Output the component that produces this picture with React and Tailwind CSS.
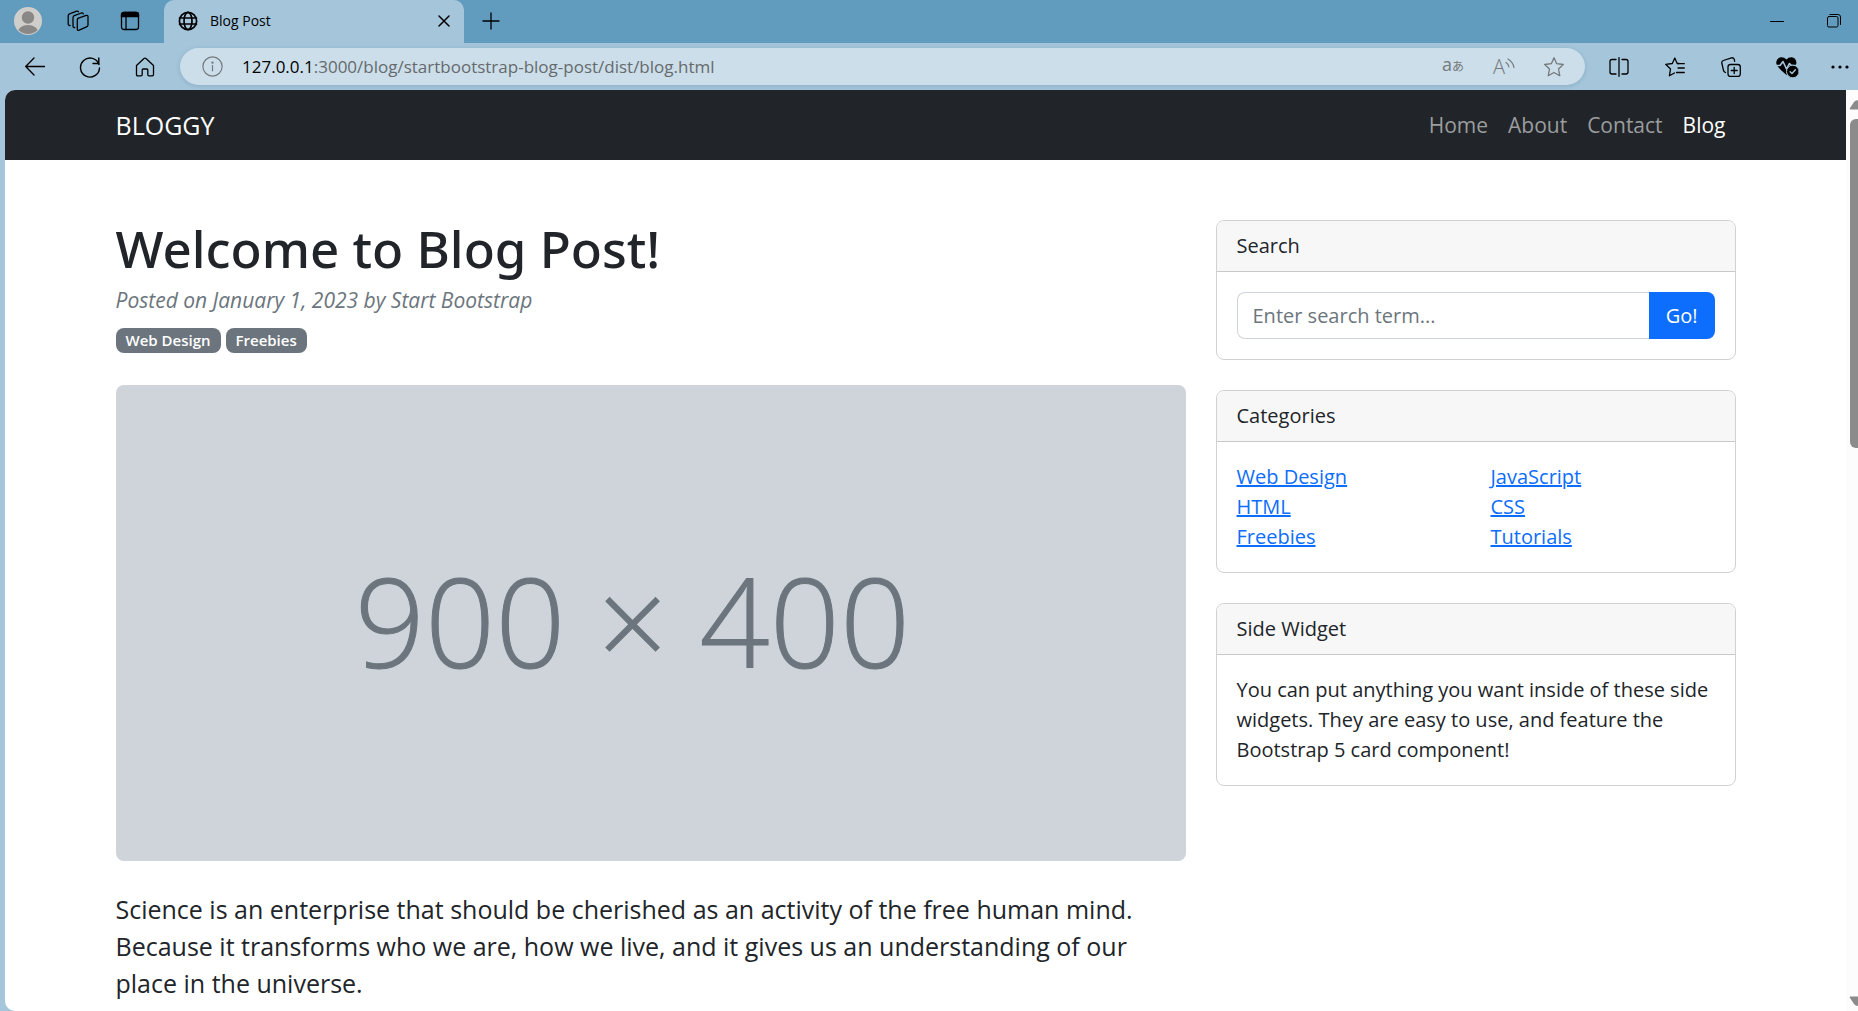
import React from "react";

const navLinks = ["Home", "About", "Contact", "Blog"];
const categories = [
  ["Web Design", "HTML", "Freebies"],
  ["JavaScript", "CSS", "Tutorials"],
];

function Icon({ children, className = "size-5", viewBox = "0 0 20 20", width = 1.3 }) {
  return (
    <svg
      viewBox={viewBox}
      className={`block shrink-0 ${className}`}
      fill="none"
      stroke="currentColor"
      strokeWidth={width}
      strokeLinecap="round"
      strokeLinejoin="round"
      aria-hidden="true"
    >
      {children}
    </svg>
  );
}

function IconButton({ label, className = "", children }) {
  return (
    <button type="button" aria-label={label} className={`flex size-8 shrink-0 items-center justify-center ${className}`}>
      {children}
    </button>
  );
}

function TabStrip() {
  return (
    <div className="flex h-[43px] bg-[#619cbf] text-black">
      <div className="flex w-[164px] shrink-0 items-center pb-0.5 pl-3">
        <IconButton label="Profile">
          <svg viewBox="0 0 28 28" className="size-7" aria-hidden="true">
            <defs>
              <clipPath id="avatar">
                <circle cx="14" cy="14" r="13" />
              </clipPath>
            </defs>
            <circle cx="14" cy="14" r="14" fill="#d0cecb" />
            <circle cx="14" cy="10.500" r="6.200" fill="#8a8886" />
            <ellipse cx="14" cy="26" rx="10.500" ry="8" fill="#8a8886" clipPath="url(#avatar)" />
          </svg>
        </IconButton>
        <IconButton label="Workspaces" className="ml-[18px]">
          <Icon className="size-[22px]" viewBox="0 0 22 22">
            <path d="M10.800 8.300 19.300 5.400Q21 5 21 6.600V15Q21 16.200 20 16.600L12.200 20.200Q10.300 20.900 10.300 19V10Q10.300 8.600 11.600 8.100Z" />
            <path d="M7.700 17.500Q6 17.800 6 16V7.800Q6 6.300 7.300 5.700L14.400 3Q16 2.600 16.300 3.900" />
            <path d="M3 15.500Q1.200 15.600 1.200 13.800V5.700Q1.200 4.400 2.500 3.800L9.700 1.200Q11 .9 11.500 1.800" />
          </Icon>
        </IconButton>
        <IconButton label="Tab actions" className="ml-[20px]">
          <Icon className="size-5">
            <rect x="1.500" y="1.500" width="17" height="17" rx="2.500" />
            <path d="M1.500 5.500V3.500Q1.500 1.500 4 1.500H16Q18.500 1.500 18.500 3.500V5.500Z" fill="currentColor" />
            <path d="M6 5.500V18.500" />
          </Icon>
        </IconButton>
      </div>
      <div className="flex w-[300px] shrink-0 items-center rounded-t-[10px] bg-[#a4c5da] pr-1 pb-0.5 pl-[14px]">
        <Icon className="size-5" width={1.7}>
          <circle cx="10" cy="10" r="8.600" />
          <ellipse cx="10" cy="10" rx="4" ry="8.600" />
          <path d="M1.500 7H18.500M1.500 13H18.500" />
        </Icon>
        <span className="ml-3 grow text-[14px] leading-5">Blog Post</span>
        <IconButton label="Close tab">
          <Icon className="size-[12px]" viewBox="0 0 12 12" width={1.5}>
            <path d="M1 1 11 11M11 1 1 11" />
          </Icon>
        </IconButton>
      </div>
      <div className="flex grow items-center pb-0.5">
        <IconButton label="New tab" className="ml-[11px]">
          <Icon className="size-[18px]" viewBox="0 0 18 18" width={1.3}>
            <path d="M9 1V17M1 9H17" />
          </Icon>
        </IconButton>
        <div className="grow" />
        <IconButton label="Minimize">
          <Icon className="size-[14px]" viewBox="0 0 14 14" width={1}>
            <path d="M.500 7.500H13.500" />
          </Icon>
        </IconButton>
        <IconButton label="Restore" className="mr-2 ml-[25px]">
          <Icon className="size-[14px]" viewBox="0 0 14 14" width={1}>
            <rect x=".5" y="2.500" width="10.500" height="10.500" rx="1.500" />
            <path d="M3 .5H11Q13.500 .5 13.500 3V10.500" />
          </Icon>
        </IconButton>
      </div>
    </div>
  );
}

function Toolbar() {
  return (
    <div className="flex h-[47px] items-center bg-[#a4c5da] text-black">
      <IconButton label="Back" className="ml-[19px]">
        <Icon className="size-5" width={1.3}>
          <path d="M19.500 9.500H.7M9 1 .7 9.500 9 18" />
        </Icon>
      </IconButton>
      <IconButton label="Refresh" className="ml-[23px]">
        <Icon className="size-[22px]" viewBox="0 0 22 22" width={1.4}>
          <path d="M20 8.500A9.500 9.500 0 1 0 20.500 12" />
          <path d="M19.800 2V7.500H14" />
        </Icon>
      </IconButton>
      <IconButton label="Home page" className="ml-[23px]">
        <Icon className="size-5">
          <path d="M1.500 8.500 9 1.500Q10 .8 11 1.500L18.500 8.500V17.500Q18.500 18.800 17.300 18.800H14Q12.800 18.800 12.800 17.500V13Q12.800 12 11.800 12H8.200Q7.200 12 7.200 13V17.500Q7.200 18.800 6 18.800H2.700Q1.500 18.800 1.500 17.500Z" />
        </Icon>
      </IconButton>
      <div className="ml-[19px] flex h-[37px] min-w-0 grow items-center rounded-full bg-[#cbdee9] pr-[15px] pl-4 text-[#75797c] shadow-[0_1px_4px_rgba(60,110,145,0.25)]">
        <IconButton label="Site information">
          <Icon className="size-[21px]" viewBox="0 0 21 21" width={1.2}>
            <circle cx="10.500" cy="10.500" r="9.600" />
            <path d="M10.500 9.500V14.800" />
            <circle cx="10.500" cy="6.600" r=".6" fill="currentColor" />
          </Icon>
        </IconButton>
        <div className="ml-[14px] min-w-0 grow truncate text-[17px] leading-6 text-[#666a6d]">
          <span className="text-black">127.0.0.1</span>:3000/blog/startbootstrap-blog-post/dist/blog.html
        </div>
        <IconButton label="Translate">
          <span className="flex items-baseline pb-1 leading-6">
            <span className="text-[18px]">a</span>
            <span className="font-['Noto_Sans_CJK_JP',sans-serif] text-[12px]">あ</span>
          </span>
        </IconButton>
        <IconButton label="Read aloud" className="ml-[19px]">
          <span className="flex items-center">
            <span className="text-[20px] leading-6 font-light">A</span>
            <Icon className="mb-2 size-[10px]" viewBox="0 0 10 10" width={1.2}>
              <path d="M1 4.500Q3.500 6 4 9M3 1Q8 4 9 9.500" />
            </Icon>
          </span>
        </IconButton>
        <IconButton label="Add to favorites" className="ml-[18px]">
          <Icon className="size-5">
            <path d="M10 .8 12.700 6.700 19.300 7.500 14.500 12 15.800 18.800 10 15.500 4.200 18.800 5.500 12 .7 7.500 7.300 6.700Z" />
          </Icon>
        </IconButton>
      </div>
      <IconButton label="Split screen" className="ml-[18px]">
        <Icon className="size-5">
          <path d="M7 2.500H3Q1 2.500 1 4.500V15Q1 17 3 17H7M13 2.500H17Q19 2.500 19 4.500V15Q19 17 17 17H13" />
          <path d="M10 .7V19.300" />
        </Icon>
      </IconButton>
      <IconButton label="Favorites" className="ml-6">
        <Icon className="size-5">
          <path d="M14 6.500H12.200L9.800 1 7.300 6.500 .7 7.300 5.500 12 4.400 18.800 9.500 16" />
          <path d="M13 6.700H19.300M13 11H19.300M11.500 15.500H19.300" />
        </Icon>
      </IconButton>
      <IconButton label="Collections" className="ml-6">
        <Icon className="size-5">
          <rect x="7" y="7.500" width="12.300" height="12" rx="2.500" />
          <path d="M13.200 10.500V16.500M10.200 13.500H16.200" />
          <path d="M4.500 15.500Q3 15 2.600 13.800L.8 6Q.6 4.200 2.300 3.500L10.500 .8Q12.500 .5 13.200 2.200L13.700 4.300" />
        </Icon>
      </IconButton>
      <IconButton label="Browser essentials" className="ml-6">
        <svg viewBox="0 0 24 22" className="h-[22px] w-6" fill="none" strokeLinecap="round" strokeLinejoin="round" aria-hidden="true">
          <path d="M11.500 3.500Q9 .8 5.800 1.200Q1.500 2 1.200 7Q1.500 11 11.500 19Q21 11 21.500 7Q21 1.500 16.500 1.200Q13.500 1 11.500 3.500Z" fill="#000" />
          <path d="M0 9.500H5L8 5.500 11.500 13 14.500 7.500 16.500 9.500H23" stroke="#a4c5da" strokeWidth="1.600" />
          <circle cx="17.800" cy="15.500" r="6.300" fill="#000" stroke="#a4c5da" strokeWidth="1" />
          <path d="M15.200 15.800 17 17.500 20.400 13.700" stroke="#a4c5da" strokeWidth="1.500" />
        </svg>
      </IconButton>
      <IconButton label="More" className="mr-[2px] ml-[21px]">
        <svg viewBox="0 0 18 4" className="h-1 w-[18px]" aria-hidden="true">
          <circle cx="2" cy="2" r="1.600" />
          <circle cx="9" cy="2" r="1.600" />
          <circle cx="16" cy="2" r="1.600" />
        </svg>
      </IconButton>
    </div>
  );
}

function Card({ title, children }) {
  return (
    <section className="mb-[30px] overflow-hidden rounded-lg border border-[#d0d1d2] bg-white">
      <h2 className="border-b border-[#c8c9ca] bg-[#f7f7f7] px-5 py-[10px]">{title}</h2>
      <div className="p-5">{children}</div>
    </section>
  );
}

function Scrollbar() {
  return (
    <div className="flex w-3 shrink-0 flex-col overflow-hidden bg-[#fcfcfc] pt-[10px] pb-[5px] pl-[3px]" aria-hidden="true">
      <svg viewBox="0 0 12 10" className="h-[10px] w-3 shrink-0">
        <path d="M1.500 9.500H12V1Q7 -1 5 2L1 8Q.3 9.500 1.500 9.500Z" fill="#8b8b8b" />
      </svg>
      <div className="mt-[9px] ml-[1px] w-4 grow-3 basis-0 rounded-md bg-[#8b8b8b]" />
      <div className="grow-5 basis-0" />
      <svg viewBox="0 0 12 10" className="h-[10px] w-3 shrink-0">
        <path d="M1.500 .5H12V9.500Q7 11 5 8L1 2Q.3 .5 1.500 .5Z" fill="#8b8b8b" />
      </svg>
    </div>
  );
}

export default function App() {
  return (
    <div className="flex min-h-screen flex-col bg-[#a4c5da] font-['Open_Sans','Noto_Sans',sans-serif]">
      <TabStrip />
      <Toolbar />
      <div className="flex grow pl-[5px]">
        <div className="min-w-0 grow overflow-hidden rounded-l-[10px] bg-white text-[20px] leading-[30px] text-[#212529]">
          <nav className="bg-[#212529]">
            <div className="mx-auto flex h-[70px] max-w-[1650px] items-center justify-between px-[15px]">
              <a href="#" className="text-[25px] text-white">BLOGGY</a>
              <ul className="flex">
                {navLinks.map((link) => (
                  <li key={link}>
                    <a href="#" className={`px-[10px] text-[21px] ${link === "Blog" ? "text-white" : "text-[#9b9d9e]"}`}>
                      {link}
                    </a>
                  </li>
                ))}
              </ul>
            </div>
          </nav>
          <div className="mx-auto grid max-w-[1650px] grid-cols-3 gap-x-[30px] px-[15px] pt-[60px]">
            <article className="col-span-2">
              <header>
                <h1 className="mb-2 font-['Noto_Sans'] text-[51px] leading-[57px] font-medium">Welcome to Blog Post!</h1>
                <div className="mb-[10px] text-[21px] text-[#6c757d] italic">Posted on January 1, 2023 by Start Bootstrap</div>
                <div className="flex h-[30px] items-center gap-[5px] text-[15px] leading-[25px] font-semibold text-white">
                  <a href="#" className="rounded-lg bg-[#6c757d] px-[10px]">Web Design</a>
                  <a href="#" className="rounded-lg bg-[#6c757d] px-[10px]">Freebies</a>
                </div>
              </header>
              <figure className="mt-[30px] flex aspect-[9/4] items-center justify-center rounded-lg bg-[#ced4da] pr-9 pb-1 text-[123px] leading-none font-light text-[#6c757d] [-webkit-text-stroke:1px_#6c757d]">
                900 × 400
              </figure>
              <p className="mt-[30px] text-[25px] leading-[37px]">
                Science is an enterprise that should be cherished as an activity of the free human mind. Because it transforms who we are, how we live, and it gives us an understanding of our place in the universe.
              </p>
            </article>
            <aside>
              <Card title="Search">
                <form className="flex" onSubmit={(e) => e.preventDefault()}>
                  <input
                    type="text"
                    aria-label="Enter search term..."
                    placeholder="Enter search term..."
                    className="h-[47px] min-w-0 grow rounded-l-lg border border-r-0 border-[#ced4da] px-[15px] placeholder:text-[#6c757d]"
                  />
                  <button type="submit" className="h-[47px] rounded-r-lg bg-[#0d6efd] px-[17px] text-white">Go!</button>
                </form>
              </Card>
              <Card title="Categories">
                <div className="grid grid-cols-2 gap-x-[30px]">
                  {categories.map((column) => (
                    <ul key={column[0]}>
                      {column.map((name) => (
                        <li key={name}>
                          <a href="#" className="text-[#0d6efd] underline">{name}</a>
                        </li>
                      ))}
                    </ul>
                  ))}
                </div>
              </Card>
              <Card title="Side Widget">
                You can put anything you want inside of these side widgets. They are easy to use, and feature the Bootstrap 5 card component!
              </Card>
            </aside>
          </div>
        </div>
        <Scrollbar />
      </div>
    </div>
  );
}
